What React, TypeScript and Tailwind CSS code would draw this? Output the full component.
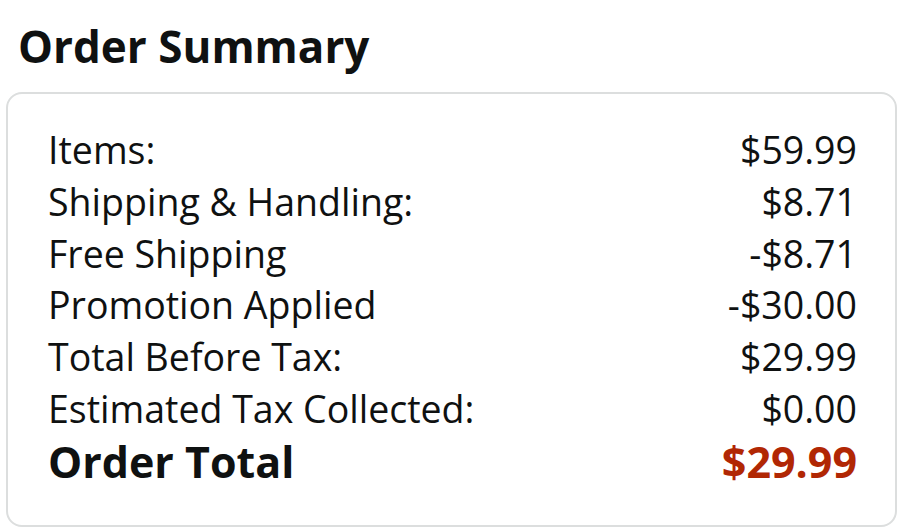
const rows = [
  { label: "Items:", value: "$59.99" },
  { label: "Shipping & Handling:", value: "$8.71" },
  { label: "Free Shipping", value: "-$8.71" },
  { label: "Promotion Applied", value: "-$30.00" },
  { label: "Total Before Tax:", value: "$29.99" },
  { label: "Estimated Tax Collected:", value: "$0.00" },
];

export default function App() {
  return (
    <main
      className="w-[900px] h-[532px] bg-white text-[#0f1111] overflow-hidden"
      style={{ fontFamily: '"Open Sans", "Noto Sans", sans-serif' }}
    >
      <h1 className="pl-[18px] pt-[16px] text-[44px] leading-[60px] font-bold">
        Order Summary
      </h1>
      <div className="ml-[6px] mt-[16px] mr-[3px] rounded-[16px] border-2 border-[#dcdede] pl-[40px] pr-[38px] pt-[30px] pb-[36px]">
        {rows.map((r) => (
          <div key={r.label} className="flex justify-between text-[37.5px] leading-[51.8px]">
            <span>{r.label}</span>
            <span>{r.value}</span>
          </div>
        ))}
        <div className="flex justify-between text-[43px] leading-[54px] font-bold">
          <span>Order Total</span>
          <span className="text-[#b12704]">$29.99</span>
        </div>
      </div>
    </main>
  );
}
